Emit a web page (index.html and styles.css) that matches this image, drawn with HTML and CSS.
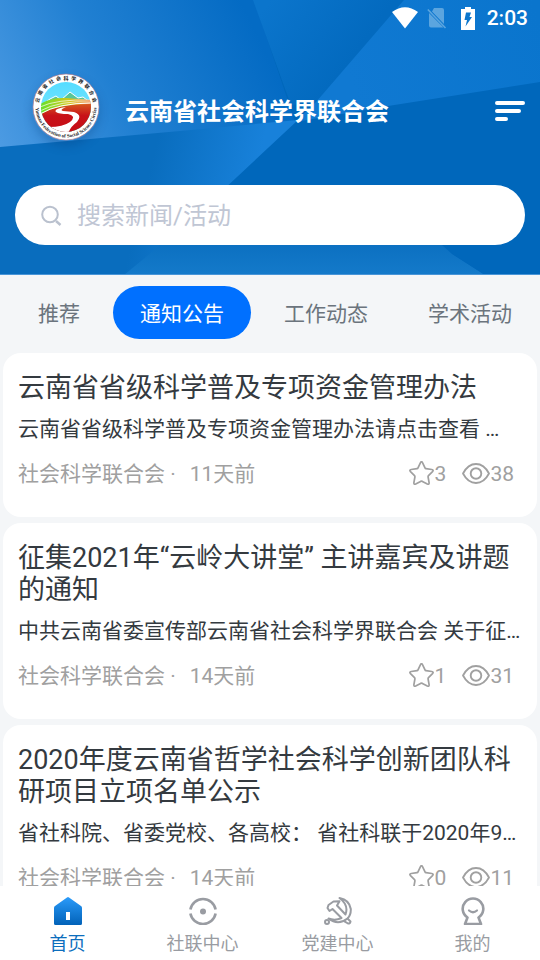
FILE: index.html
```html
<!DOCTYPE html>
<html lang="zh-CN">
<head>
<meta charset="utf-8">
<meta name="viewport" content="width=device-width, initial-scale=1">
<title>云南省社会科学界联合会</title>
<link rel="stylesheet" href="styles.css">
</head>
<body>
<svg class="defs" aria-hidden="true">
  <symbol id="star" viewBox="0 0 26 26"><path d="M11.500 1.600Q12.500 -.3 13.500 1.600L16 6.800Q16.300 7.500 17 7.600L22.800 8.500Q25 9 23.500 10.600L19.500 14.600Q19 15.200 19.100 16L20.100 21.600Q20.300 23.900 18.300 23L13.400 20.400Q12.500 20 11.600 20.400L6.700 23Q4.700 23.900 4.900 21.600L5.900 16Q6 15.200 5.500 14.600L1.500 10.600Q0 9 2.200 8.500L8 7.600Q8.700 7.500 9 6.800Z" fill="none" stroke="currentColor" stroke-width="1.700"/></symbol>
  <symbol id="eye" viewBox="0 0 28 26"><path d="M1 12.500Q6 3 14 3T27 12.500Q22 22 14 22T1 12.500Z" fill="none" stroke="currentColor" stroke-width="1.800" stroke-linejoin="round"/><circle cx="14" cy="12.500" r="5.300" fill="none" stroke="currentColor" stroke-width="1.900"/></symbol>
</svg>

<header class="hero">
  <svg class="hero-art" viewBox="0 0 540 275" preserveAspectRatio="none" aria-hidden="true">
    <defs>
      <linearGradient id="left" gradientUnits="userSpaceOnUse" x1="0" y1="140" x2="250" y2="20"><stop offset="0" stop-color="#4b9ae2"/><stop offset=".45" stop-color="#2180d2"/><stop offset="1" stop-color="#046bc4"/></linearGradient>
      <linearGradient id="middle" gradientUnits="userSpaceOnUse" x1="270" y1="0" x2="350" y2="60"><stop offset="0" stop-color="#0b75cc"/><stop offset="1" stop-color="#036abf"/></linearGradient>
      <linearGradient id="right" gradientUnits="userSpaceOnUse" x1="350" y1="80" x2="540" y2="20"><stop offset="0" stop-color="#1079d2"/><stop offset="1" stop-color="#0a75cd"/></linearGradient>
      <linearGradient id="wedge" gradientUnits="userSpaceOnUse" x1="155" y1="150" x2="255" y2="175"><stop offset="0" stop-color="#096dbe"/><stop offset="1" stop-color="#1881da"/></linearGradient>
      <linearGradient id="base" gradientUnits="userSpaceOnUse" x1="0" y1="235" x2="0" y2="275"><stop offset="0" stop-color="#096dbe"/><stop offset="1" stop-color="#147aca"/></linearGradient>
    </defs>
    <path fill="#0067bb" d="M0 0H540V275H0Z"/>
    <path fill="url(#left)" d="M0 0H254L295 122L0 148Z"/>
    <path fill="url(#middle)" d="M253 0H405L316 102L291 105Z"/>
    <path fill="url(#right)" d="M404 0H540V82L388 106L295 122L316 102Z"/>
    <path fill="url(#wedge)" d="M0 147L180 131L298 120L222 191L128 275H0Z"/>
    <path fill="url(#base)" d="M222 190H400L452 254L485 275H124L152 252Z"/>
    <path fill="#0067bb" d="M380 190H540V275H485L451 253Z"/>
    <path fill="#4895d8" d="M0 274H540V275H0Z"/>
  </svg>
  <div class="status">
    <svg width="26" height="22" viewBox="0 0 26 22" aria-label="Wi-Fi"><path fill="#fff" d="M0 5Q13-4.500 26 5L13 21.500Z"/></svg>
    <svg class="sim" width="20" height="22" viewBox="0 0 20 22" aria-hidden="true"><path fill="#5ba5df" d="M7 1H15Q17 1 17 3V17L5 4.500ZM2 6L16.500 20.500H4Q2 20.500 2 18.500Z"/><path d="M.8 2.500L18.500 21" stroke="#5ba5df" stroke-width="1.600"/></svg>
    <svg class="battery" width="14" height="23" viewBox="0 0 14 23" aria-hidden="true"><path fill="#fff" d="M4 0H10V2H14V23H0V2H4Z"/><path fill="#0b76cd" d="M5 5.500H10L8.500 10H11L4.500 19.500L6 13H3.500Z"/></svg>
    <time>2:03</time>
  </div>
  <div class="brand">
    <svg class="logo" viewBox="0 0 68 68" role="img" aria-label="云南省社会科学界联合会">
      <defs>
        <clipPath id="disc"><circle cx="34" cy="34" r="25"/></clipPath>
        <linearGradient id="sky" x1="0" y1="0" x2="0" y2="1"><stop offset="0" stop-color="#55dcff"/><stop offset="1" stop-color="#8aeaff"/></linearGradient>
        <linearGradient id="field" x1="0" y1="0" x2="1" y2="0"><stop offset="0" stop-color="#65e12b"/><stop offset=".55" stop-color="#d1c91c"/><stop offset="1" stop-color="#f1702b"/></linearGradient>
        <linearGradient id="soil" x1="0" y1="0" x2="0" y2="1"><stop offset="0" stop-color="#d65620"/><stop offset=".4" stop-color="#c81218"/><stop offset="1" stop-color="#c60b15"/></linearGradient>
        <path id="arc-top" d="M6.500 34A27.500 27.500 0 0 1 61.500 34"/>
        <path id="arc-bottom" d="M3.500 34A30.500 30.500 0 0 0 64.500 34"/>
      </defs>
      <circle cx="34" cy="34" r="33" fill="#fff" stroke="#b5707c" stroke-width=".6"/>
      <g clip-path="url(#disc)">
        <path fill="url(#sky)" d="M9 9H59V59H9Z"/>
        <path d="M8 33L18 26L24 23L29 27L38 19L46 25L51 24L60 31V60H8Z" fill="#58c69a" stroke="#fff" stroke-width="1"/>
        <path d="M8 31Q20 24 34 25T60 27V33Q30 29 8 43Z" fill="url(#field)"/>
        <path d="M8 34Q24 26 60 27M8 38Q28 27 60 29" fill="none" stroke="#fff" stroke-width=".7"/>
        <path d="M8 42Q24 31 60 31V60H8Z" fill="url(#soil)"/>
        <path d="M8 41Q26 30 60 30" fill="none" stroke="#fff" stroke-width="1"/>
        <path fill="#fff" d="M34 34Q21 36 24 39Q27 41 36 41Q45 43 38 49Q31 54 17 54L22 61H36Q38 54 45 49Q51 42 42 39L31 38Q27 37 34 34Z"/>
      </g>
      <text class="seal-cn"><textPath href="#arc-top" startOffset="50%" text-anchor="middle">云  南  省  社  会  科  学  界  联  合  会</textPath></text>
      <text class="seal-en"><textPath href="#arc-bottom" startOffset="50%" text-anchor="middle">Yunnan Federation of Social Science Circles</textPath></text>
    </svg>
    <h1>云南省社会科学界联合会</h1>
    <button class="menu" type="button" aria-label="菜单"><svg width="30" height="20" viewBox="0 0 30 20"><path d="M2 2H28M2 10H24M2 18H11" stroke="#fff" stroke-width="4" stroke-linecap="round"/></svg></button>
  </div>
  <label class="search">
    <svg width="21" height="21" viewBox="0 0 21 21" aria-hidden="true"><circle cx="9" cy="9.500" r="7.800" fill="none" stroke="#bac1ce" stroke-width="2"/><path d="M15 16L19.500 20" stroke="#bac1ce" stroke-width="2.400"/></svg>
    <input type="search" placeholder="搜索新闻/活动" aria-label="搜索新闻/活动">
  </label>
</header>

<nav class="tabs">
  <button type="button">推荐</button>
  <button type="button" class="active">通知公告</button>
  <button type="button">工作动态</button>
  <button type="button">学术活动</button>
</nav>

<main class="feed">
  <article class="card">
    <h2>云南省省级科学普及专项资金管理办法</h2>
    <p class="summary">云南省省级科学普及专项资金管理办法请点击查看 …</p>
    <div class="meta"><span>社会科学联合会 ·</span><time>11天前</time>
      <span class="stats"><span><svg width="26" height="26"><use href="#star"/></svg>3</span><span><svg width="28" height="26"><use href="#eye"/></svg>38</span></span></div>
  </article>
  <article class="card">
    <h2>征集2021年“云岭大讲堂” 主讲嘉宾及讲题的通知</h2>
    <p class="summary">中共云南省委宣传部云南省社会科学界联合会 关于征…</p>
    <div class="meta"><span>社会科学联合会 ·</span><time>14天前</time>
      <span class="stats"><span><svg width="26" height="26"><use href="#star"/></svg>1</span><span><svg width="28" height="26"><use href="#eye"/></svg>31</span></span></div>
  </article>
  <article class="card">
    <h2>2020年度云南省哲学社会科学创新团队科研项目立项名单公示</h2>
    <p class="summary">省社科院、省委党校、各高校： 省社科联于2020年9…</p>
    <div class="meta"><span>社会科学联合会 ·</span><time>14天前</time>
      <span class="stats"><span><svg width="26" height="26"><use href="#star"/></svg>0</span><span><svg width="28" height="26"><use href="#eye"/></svg>11</span></span></div>
  </article>
</main>

<nav class="tabbar">
  <a href="#" class="current">
    <svg width="28" height="28" viewBox="0 0 28 28" aria-hidden="true"><defs><linearGradient id="home" x1="0" y1="0" x2="0" y2="1"><stop offset="0" stop-color="#2a9bfa"/><stop offset="1" stop-color="#0262b8"/></linearGradient></defs><path fill="url(#home)" d="M13 .5Q14-.3 15 .5L27 9Q28 9.700 28 11V26.500Q28 28 26.500 28H1.500Q0 28 0 26.500V11Q0 9.700 1 9Z"/><path fill="#fff" d="M12 15H16V23H12Z"/></svg>
    首页</a>
  <a href="#">
    <svg width="28" height="28" viewBox="0 0 28 28" aria-hidden="true"><path d="M1.400 12.500A12.800 12.800 0 0 1 26.600 12.500M1.400 16.500A12.800 12.800 0 0 0 26.600 16.500" fill="none" stroke="currentColor" stroke-width="2.600"/><circle cx="14" cy="14.500" r="3" fill="currentColor"/></svg>
    社联中心</a>
  <a href="#">
    <svg width="28" height="28" viewBox="0 0 28 28" aria-hidden="true"><g fill="none" stroke="currentColor" stroke-width="2" stroke-linejoin="round" stroke-linecap="round"><path d="M15.500 1Q25.500 3 26.800 12Q27 18 23.500 21.500Q14 29 4.500 21.500Q11 24 17.500 21L8.500 12L5.500 14L3.500 11L4.500 8L9.500 4.500L15.500 4.200L13 8.500L21.500 17.500Q25 8 15.500 1Z"/><path d="M23.500 21.500L26.500 24.500Q26 27 24 26.500L20.500 24.300"/><circle cx="3" cy="25" r="2"/></g></svg>
    党建中心</a>
  <a href="#">
    <svg width="28" height="28" viewBox="0 0 28 28" aria-hidden="true"><path d="M8.500 20.500A10.300 10.300 0 1 1 19.500 20.500L22 27H6Z" fill="none" stroke="currentColor" stroke-width="2.600" stroke-linejoin="round"/><path d="M10 13.500Q14 17 18 13.500" fill="none" stroke="currentColor" stroke-width="2.200" stroke-linecap="round"/></svg>
    我的</a>
</nav>
</body>
</html>
```
FILE: styles.css
```css
* { box-sizing: border-box; }

body {
  margin: 0;
  height: 100vh;
  display: flex;
  flex-direction: column;
  overflow: hidden;
  background: #f4f6f8;
  color: #343a40;
  font-family: Roboto, "Noto Sans CJK SC", sans-serif;
  font-size: 21px;
}

h1, h2, p { margin: 0; }
button, input { font: inherit; border: 0; background: none; padding: 0; }
svg { display: block; flex: none; }
.defs { position: absolute; width: 0; height: 0; }

/* Header */
.hero {
  position: relative;
  flex: none;
  padding: 0 15px 30px;
  color: #fff;
}
.hero-art {
  position: absolute;
  inset: 0;
  width: 100%;
  height: 100%;
  z-index: -1;
}
.status {
  display: flex;
  justify-content: flex-end;
  align-items: center;
  height: 36px;
  margin-right: -3px;
  font-weight: 500;
}
.sim { margin-left: 9px; }
.battery { margin: 0 12px 0 14px; }
.brand {
  display: flex;
  align-items: center;
  height: 149px;
  padding-left: 17px;
}
.logo {
  width: 68px;
  height: 68px;
  margin-bottom: 8px;
  border-radius: 50%;
  box-shadow: 0 5px 10px rgba(0, 50, 110, .25);
}
.seal-cn { font: bold 5px "Noto Sans CJK SC", sans-serif; fill: #222; white-space: pre; }
.seal-en { font: bold 5px "Liberation Serif", serif; fill: #222; }
.brand h1 {
  flex: 1;
  margin-left: 25px;
  padding-top: 2px;
  font-size: 24px;
  line-height: 32px;
  font-weight: bold;
}
.search {
  display: flex;
  align-items: center;
  height: 60px;
  padding: 0 26px;
  gap: 15px;
  border-radius: 30px;
  background: #fff;
}
.search input {
  flex: 1;
  min-width: 0;
  padding-top: 2px;
  font-size: 24px;
  color: #343a40;
  outline: 0;
}
.search input::placeholder { color: #c0c6d4; }

/* Category tabs */
.tabs {
  display: flex;
  flex: none;
  gap: 6px;
  padding: 11px 0 14px 11px;
  overflow: hidden;
}
.tabs button {
  flex: none;
  height: 53px;
  padding: 0 27px 2px;
  border-radius: 27px;
  color: #6b747d;
}
.tabs .active { background: #0070ff; color: #fff; }

/* News list */
.feed {
  flex: 1;
  min-height: 0;
  overflow: hidden;
  padding: 0 3px;
}
.card {
  margin-bottom: 6px;
  padding: 19px 15px 28px;
  border-radius: 18px;
  background: #fff;
}
.card h2 {
  font-size: 27px;
  line-height: 32px;
  font-weight: normal;
}
.summary {
  margin: 10px 0 15px;
  line-height: 30px;
  white-space: nowrap;
  overflow: hidden;
  text-overflow: ellipsis;
}
.meta {
  display: flex;
  align-items: center;
  gap: 14px;
  height: 30px;
  line-height: 30px;
  color: #a0a0a0;
}
.stats {
  display: flex;
  gap: 16px;
  margin: 0 8px 0 auto;
}
.stats span { display: flex; align-items: center; }

/* Bottom navigation */
.tabbar {
  display: flex;
  flex: none;
  height: 74px;
  padding-top: 11px;
  background: #fff;
}
.tabbar a {
  flex: 1;
  display: flex;
  flex-direction: column;
  align-items: center;
  gap: 6px;
  color: #999ca2;
  font-size: 18px;
  line-height: 26px;
  text-decoration: none;
}
.tabbar .current { color: #0d6ebd; }
```
